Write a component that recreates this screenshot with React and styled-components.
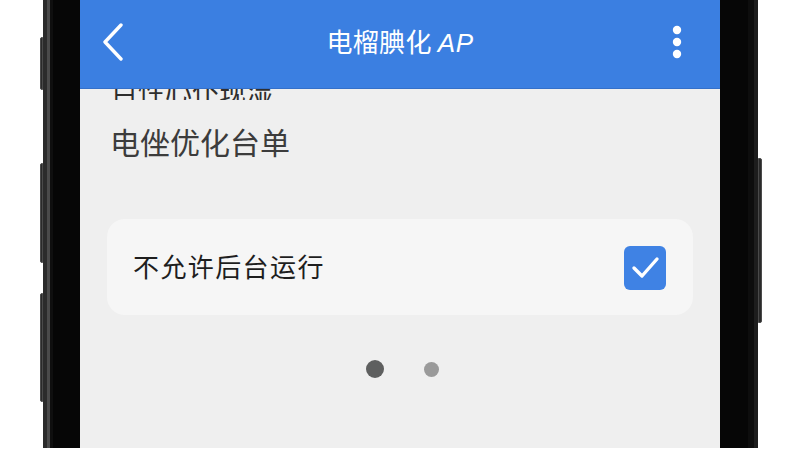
import React from 'react';
import styled, { createGlobalStyle } from 'styled-components';

const GlobalStyle = createGlobalStyle`
  html, body {
    margin: 0;
    padding: 0;
    background: #ffffff;
    overflow: hidden;
  }
  body {
    font-family: "Noto Sans CJK SC", "Noto Sans", sans-serif;
  }
`;

const Stage = styled.div`
  display: flex;
  width: 800px;
  height: 450px;
  padding-left: 40px;
  box-sizing: border-box;
`;

const Rail = styled.div`
  display: flex;
  flex-direction: column;
  width: ${p => p.$width}px;
  padding-top: ${p => p.$top}px;
`;

const Gap = styled.div`
  height: ${p => p.$h}px;
`;

const SideKey = styled.div`
  height: ${p => p.$h}px;
  background: #2a2a2a;
  border-radius: ${p => (p.$right ? '0 2px 2px 0' : '2px 0 0 2px')};
  border: 1px solid #4a4a4a;
  box-sizing: border-box;
`;

const Bezel = styled.div`
  width: ${p => p.$width}px;
  height: 448px;
  background: #060606;
  box-sizing: border-box;
  ${p => (p.$right
    ? 'border-right: 4px solid #1d1d1d; box-shadow: inset -6px 0 0 #0d0d0d;'
    : 'border-left: 4px solid #2b2b2b; box-shadow: inset 3px 0 0 #4a4a4a, inset 6px 0 0 #0f0f0f;')}
`;

const Screen = styled.div`
  width: 640px;
  height: 448px;
  display: flex;
  flex-direction: column;
  background: #efefef;
  overflow: hidden;
`;

const Header = styled.header`
  flex: 0 0 89px;
  display: flex;
  align-items: center;
  justify-content: space-between;
  padding: 0 37px 5px 13px;
  box-sizing: border-box;
  background: #3b7fe1;
  color: #ffffff;
  border-bottom: 1px solid #3470c9;
  position: relative;
  z-index: 1;
`;

const IconButton = styled.button`
  display: flex;
  align-items: center;
  justify-content: center;
  width: ${p => p.$w}px;
  height: 44px;
  padding: 0;
  border: none;
  background: none;
  color: #ffffff;
`;

const Title = styled.h1`
  margin: 0;
  font-size: 26px;
  font-weight: 400;
  letter-spacing: 0.3px;
  line-height: 1;
  padding-right: 4px;
`;

const Latin = styled.span`
  font-family: "Liberation Sans", sans-serif;
  font-style: italic;
  font-weight: 400;
  font-size: 26px;
  letter-spacing: 0.5px;
`;

const Body = styled.main`
  flex: 1;
  display: flex;
  flex-direction: column;
  padding: 0 27px;
`;

const PeekLine = styled.div`
  height: 11px;
  overflow: hidden;
  display: flex;
  align-items: flex-end;
  padding-left: 4px;
  font-size: 27px;
  line-height: 1;
  color: #2e2e2e;
  & > span {
    display: block;
    transform: translateY(4px);
  }
`;

const Heading = styled.div`
  margin-top: 21px;
  padding-left: 3px;
  font-size: 30px;
  line-height: 40px;
  color: #3c3c3c;
`;

const Card = styled.label`
  margin-top: 58px;
  height: 96px;
  display: flex;
  align-items: center;
  justify-content: space-between;
  padding: 0 27px 0 26px;
  border-radius: 18px;
  background: #f6f6f6;
  box-sizing: border-box;
`;

const CardText = styled.span`
  font-size: 26px;
  color: #1e1e1e;
  letter-spacing: 1.4px;
  margin-top: -4px;
`;

const Check = styled.span`
  width: 42px;
  height: 44px;
  border-radius: 6px;
  background: #3f82e4;
  display: flex;
  align-items: center;
  justify-content: center;
  margin-top: 2px;
`;

const Pager = styled.div`
  display: flex;
  justify-content: center;
  align-items: center;
  gap: 40px;
  margin-top: 45px;
  padding-left: 4px;
`;

const Dot = styled.span`
  width: ${p => (p.$active ? 18 : 15)}px;
  height: ${p => (p.$active ? 18 : 15)}px;
  border-radius: 50%;
  background: ${p => (p.$active ? '#5e5f5f' : '#9a9a9a')};
`;

export default function App() {
  return (
    <>
      <GlobalStyle />
      <Stage>
        <Rail $width={3} $top={37}>
          <SideKey $h={53} />
          <Gap $h={73} />
          <SideKey $h={100} />
          <Gap $h={30} />
          <SideKey $h={109} />
        </Rail>
        <Bezel $width={37} />
        <Screen>
          <Header>
            <IconButton $w={40} aria-label="back">
              <svg width="24" height="38" viewBox="0 0 24 38" fill="none">
                <path d="M20 2 L4 19 L20 36" stroke="#fff" strokeWidth="3.4" strokeLinecap="round" strokeLinejoin="round" />
              </svg>
            </IconButton>
            <Title>电榴腆化 <Latin>AP</Latin></Title>
            <IconButton $w={12} aria-label="more">
              <svg width="10" height="34" viewBox="0 0 10 34" fill="#fff">
                <circle cx="5" cy="5" r="4.2" />
                <circle cx="5" cy="17" r="4.2" />
                <circle cx="5" cy="29" r="4.2" />
              </svg>
            </IconButton>
          </Header>
          <Body>
            <PeekLine><span>目性心仆现湿</span></PeekLine>
            <Heading>电侳优化台单</Heading>
            <Card>
              <CardText>不允许后台运行</CardText>
              <Check>
                <svg width="30" height="24" viewBox="0 0 30 24" fill="none">
                  <path d="M4 12 L12 20 L27 3" stroke="#fff" strokeWidth="3.4" strokeLinecap="round" strokeLinejoin="round" />
                </svg>
              </Check>
            </Card>
            <Pager>
              <Dot $active />
              <Dot />
            </Pager>
          </Body>
        </Screen>
        <Bezel $width={38} $right />
        <Rail $width={4} $top={158}>
          <SideKey $h={165} $right />
        </Rail>
      </Stage>
    </>
  );
}
